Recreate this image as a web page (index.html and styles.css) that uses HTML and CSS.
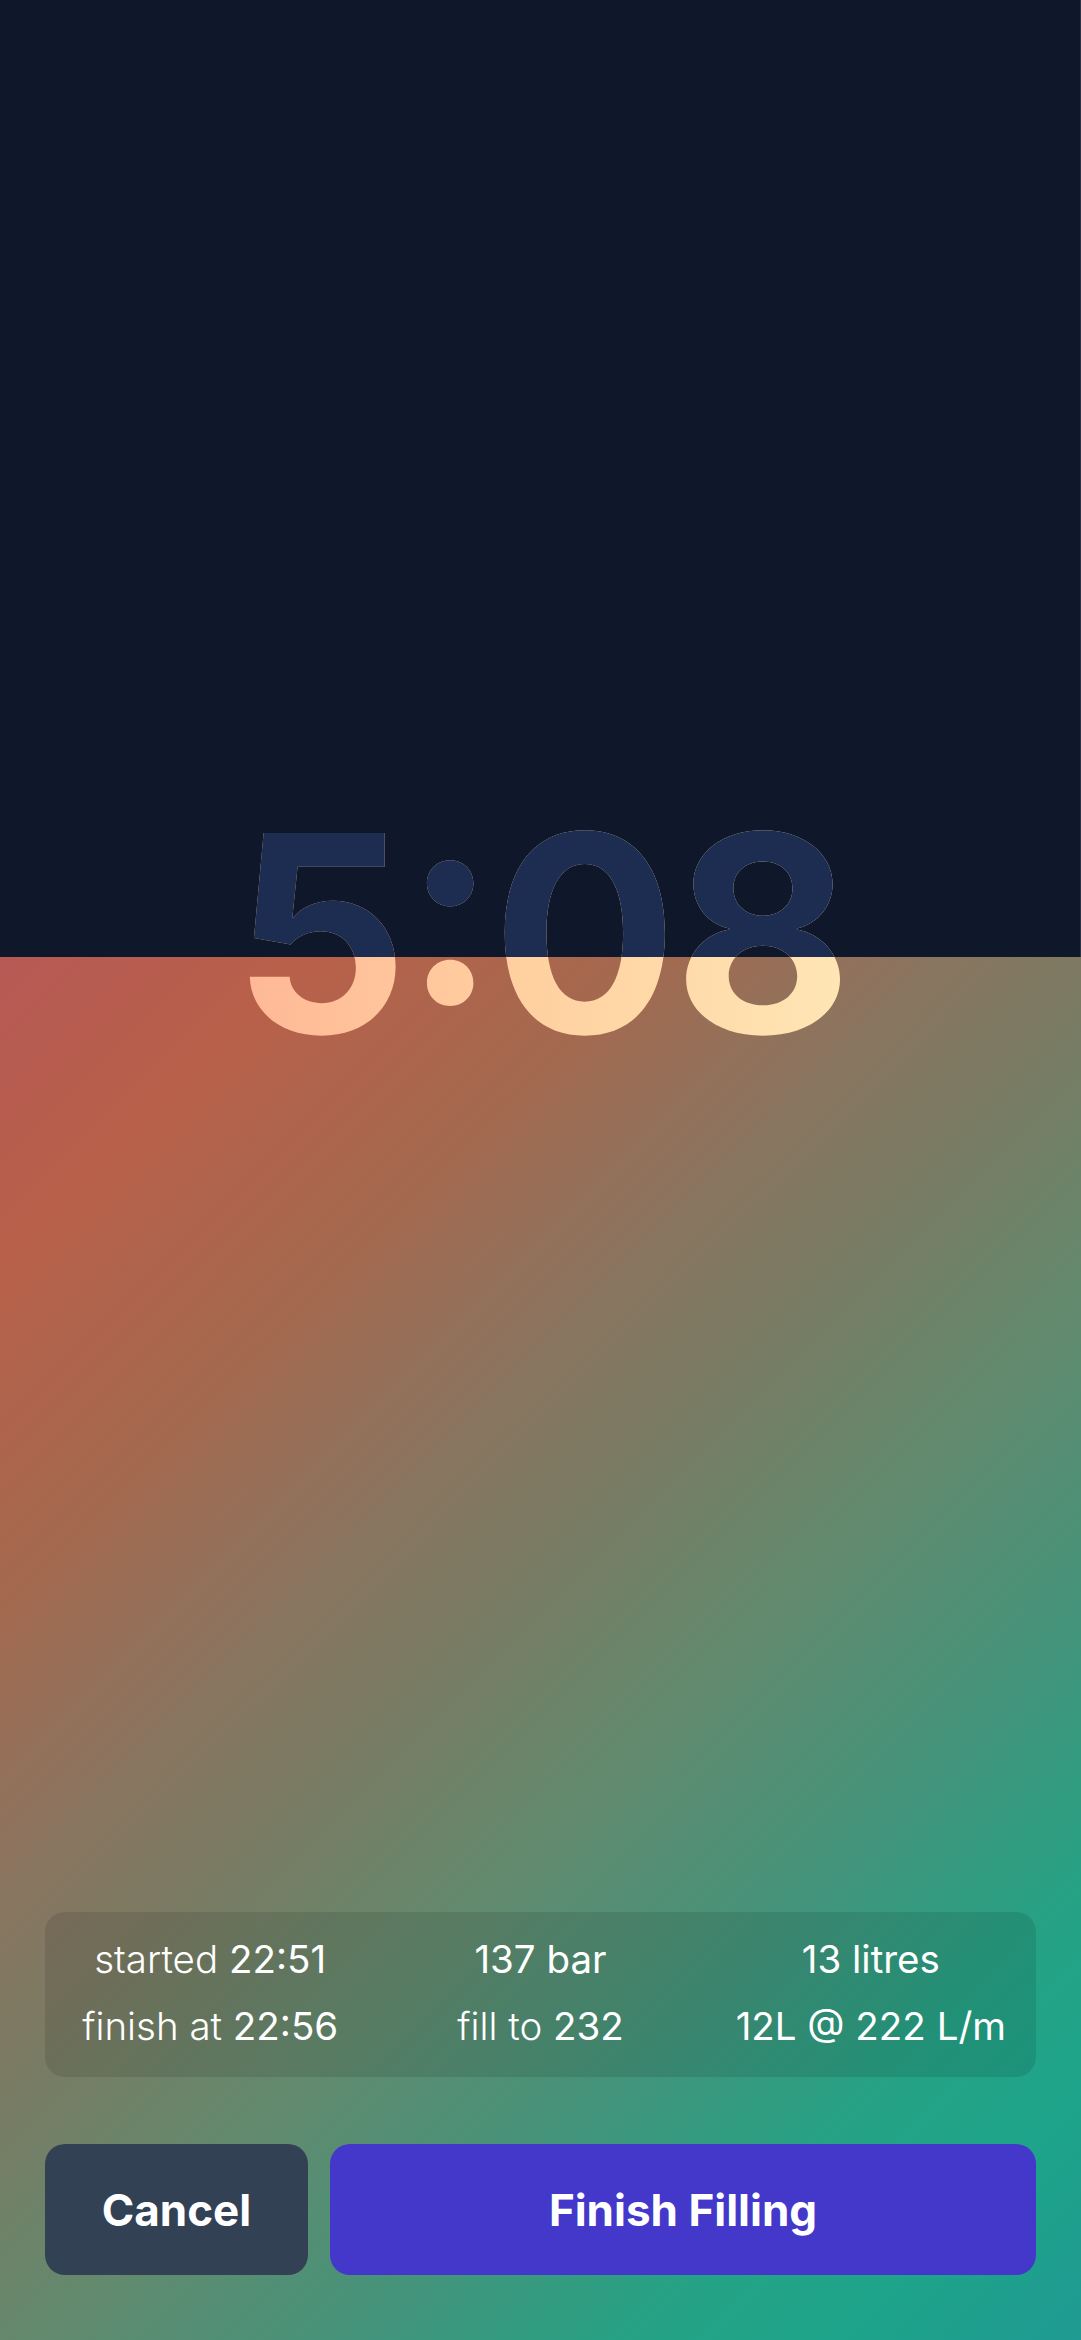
FILE: index.html
```html
<!DOCTYPE html>
<html lang="en">
<head>
<meta charset="utf-8">
<title>Filling</title>
<link rel="stylesheet" href="styles.css">
</head>
<body>
<div class="screen">
  <div class="timer-wrap">
    <div class="timer">5:08</div>
  </div>
  <div class="spacer"></div>
  <div class="info">
    <div class="cell"><span class="lbl">started</span> 22:51</div>
    <div class="cell">137 bar</div>
    <div class="cell">13 litres</div>
    <div class="cell"><span class="lbl">finish at</span> 22:56</div>
    <div class="cell"><span class="lbl">fill to</span> 232</div>
    <div class="cell">12L @ 222 L/m</div>
  </div>
  <div class="actions">
    <button class="btn cancel">Cancel</button>
    <button class="btn finish">Finish Filling</button>
  </div>
</div>
</body>
</html>
```
FILE: styles.css
```css
* { box-sizing: border-box; }
html, body { margin: 0; padding: 0; }
body { font-family: Inter, "Noto Sans", sans-serif; background: #0f172a; }

.screen {
  width: 1081px;
  height: 2340px;
  display: flex;
  flex-direction: column;
  background:
    linear-gradient(#0f172a, #0f172a) top left / 1080px 957px no-repeat,
    linear-gradient(#2a3447, #2a3447) top right / 1px 957px no-repeat,
    linear-gradient(135deg,
      #b65955 0%,
      #b9604a 12%,
      #a4694f 26%,
      #8a7560 38%,
      #7a7b63 46%,
      #628a6e 58%,
      #45937a 70%,
      #25a285 82%,
      #1ea48a 90%,
      #1f9a92 100%) bottom left / 1081px 1383px no-repeat;
  padding: 0 45px 65px;
}

.timer-wrap {
  display: flex;
  justify-content: center;
  padding-top: 796px;
}

.timer {
  font-size: 275px;
  line-height: 1;
  font-weight: 700;
  letter-spacing: -4px;
  font-feature-settings: "case" 1, "calt" 1;
  color: transparent;
  background:
    linear-gradient(to bottom, #1c2d51 161px, transparent 161px),
    linear-gradient(to right, #ffb796, #ffcf9f 45%, #ffe6b5);
  -webkit-background-clip: text;
  background-clip: text;
}

.spacer { flex: 1; }

.info {
  display: grid;
  grid-template-columns: 1fr 1fr 1fr;
  padding: 14px 0 17px;
  border-radius: 20px;
  background: rgba(0, 0, 0, 0.1);
  color: #ffffff;
}

.cell {
  text-align: center;
  font-size: 38.5px;
  line-height: 67px;
  font-weight: 400;
  white-space: nowrap;
}

.lbl { font-weight: 300; }

.actions {
  display: flex;
  gap: 22px;
  margin-top: 67px;
}

.btn {
  height: 131px;
  border: none;
  border-radius: 20px;
  color: #ffffff;
  font-family: Inter, "Noto Sans", sans-serif;
  font-weight: 700;
  font-size: 44px;
  padding: 0;
}

.cancel {
  width: 263px;
  background: #334155;
}

.finish {
  flex: 1;
  background: #4338ca;
}
```
